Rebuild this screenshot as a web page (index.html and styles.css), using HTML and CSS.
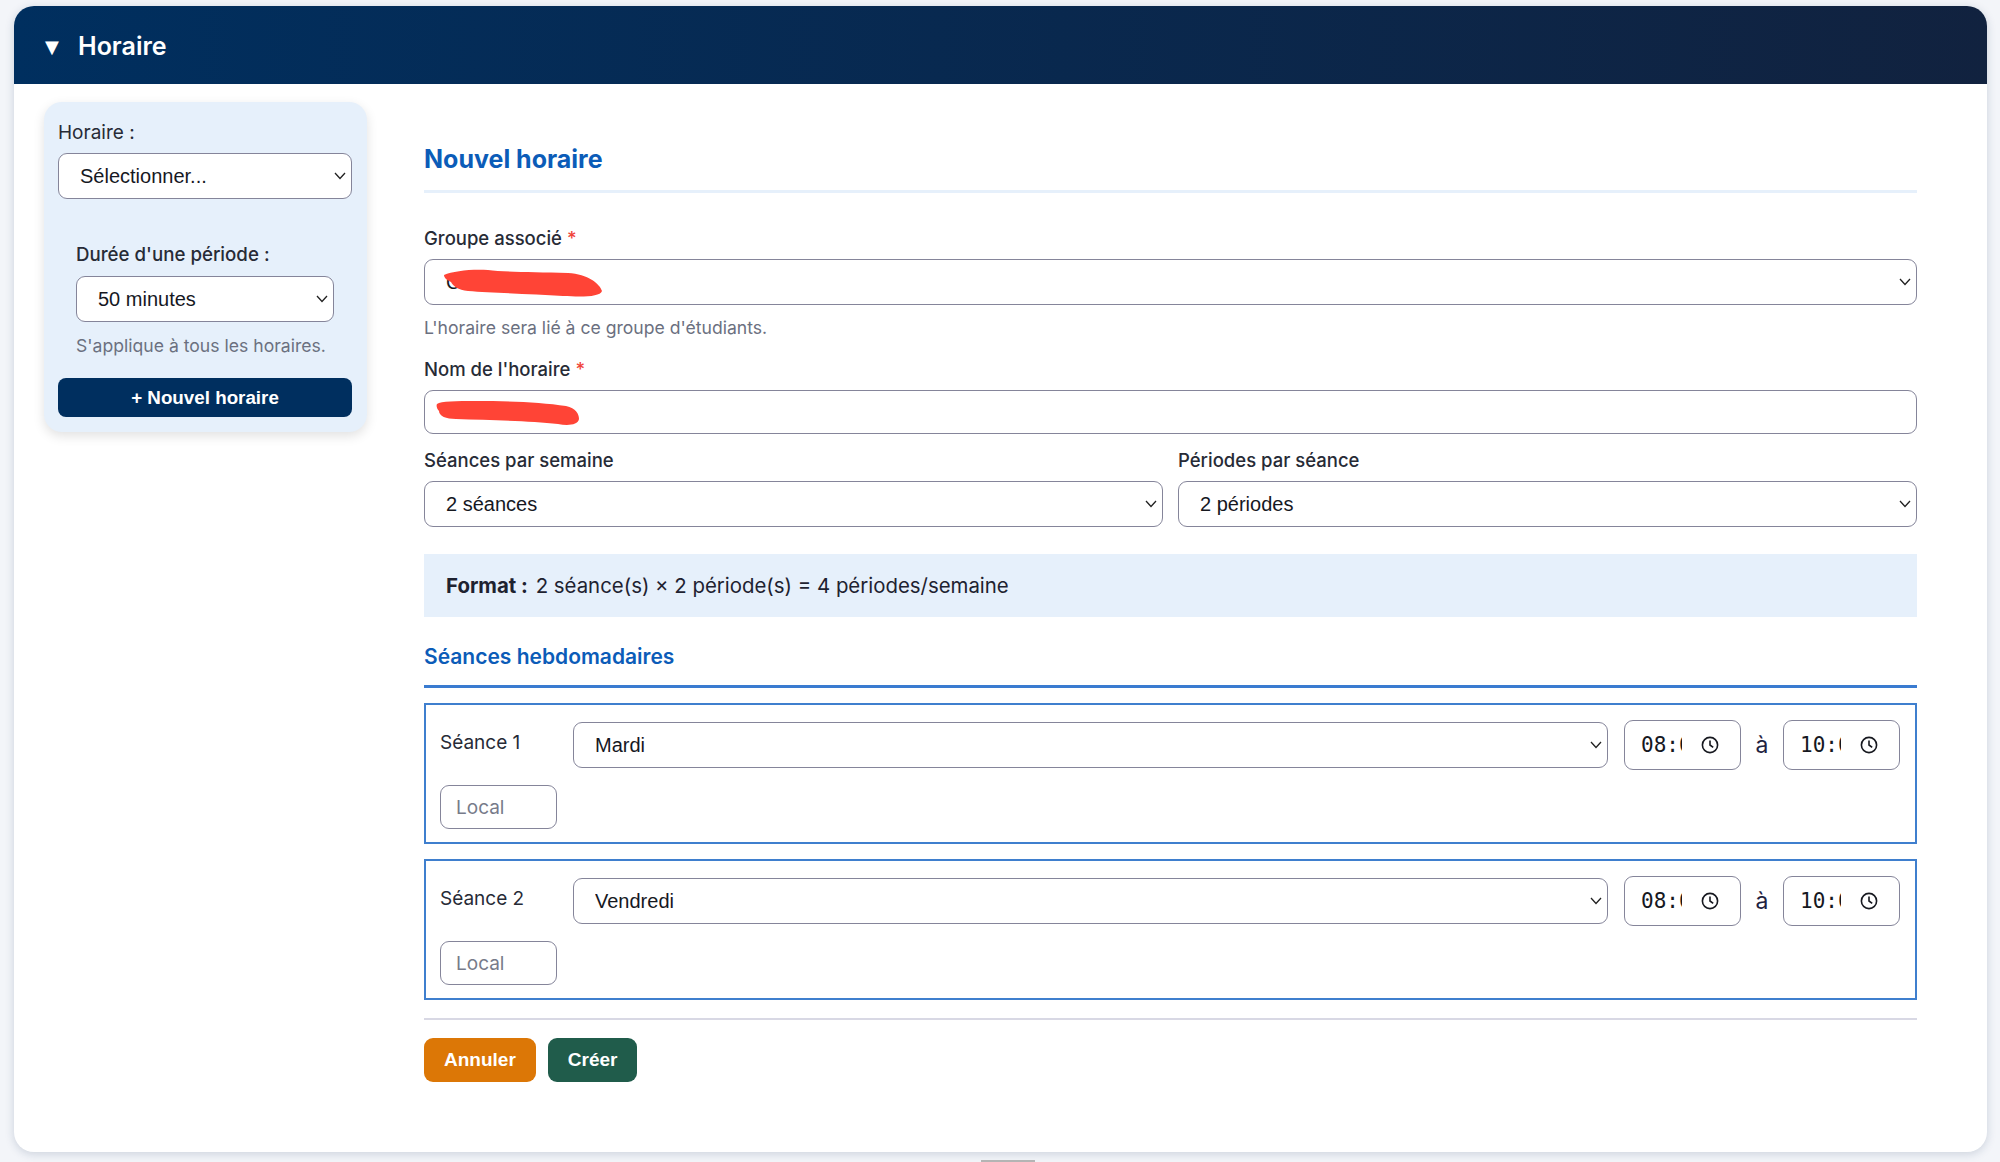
FILE: index.html
```html
<!DOCTYPE html>
<html lang="fr">
<head>
  <meta charset="UTF-8">
  <meta name="viewport" content="width=device-width, initial-scale=1.0">
  <title>Horaire</title>
  <link rel="stylesheet" href="styles.css">
</head>
<body>
<div class="card">
  <div class="card-header">
    <span class="arrow">▼</span>
    <span class="card-title">Horaire</span>
  </div>

  <div class="card-body">
    <div class="sidebar">
      <label class="side-label">Horaire :</label>
      <select class="field">
        <option>Sélectionner...</option>
      </select>

      <div class="duration">
        <label class="duration-label">Durée d'une période :</label>
        <select class="field">
          <option>50 minutes</option>
        </select>
        <p class="hint">S'applique à tous les horaires.</p>
      </div>

      <button class="new-btn">+ Nouvel horaire</button>
    </div>

    <div class="main">
      <h2 class="form-title">Nouvel horaire</h2>

      <label class="label">Groupe associé <span class="req">*</span></label>
      <div class="redacted">
        <select class="field">
          <option>C</option>
        </select>
        <svg class="scribble scribble-group" viewBox="0 0 160 28" width="160" height="28">
          <path d="M1 6 C10 2 28 0 45 1 C60 3 90 3 125 4 C145 5 157 15 159 22 C157 28 140 28 120 27 C90 25 50 24 25 22 C15 21 10 17 8 13 C4 11 1 9 1 6Z" fill="#ff4436"/>
        </svg>
      </div>
      <p class="hint hint-group">L'horaire sera lié à ce groupe d'étudiants.</p>

      <label class="label">Nom de l'horaire <span class="req">*</span></label>
      <div class="redacted">
        <input class="field text-field" type="text">
        <svg class="scribble scribble-name" viewBox="0 0 144 25" width="144" height="25">
          <path d="M1 3 C5 0 20 0 40 0 C70 0 105 1 130 5 C140 7 143 13 143 18 C142 24 132 25 122 23 C95 20 55 19 20 18 C10 18 3 15 3 10 C1 8 0 5 1 3Z" fill="#ff4436"/>
        </svg>
      </div>

      <div class="two-cols">
        <div>
          <label class="label">Séances par semaine</label>
          <select class="field">
            <option>2 séances</option>
          </select>
        </div>
        <div>
          <label class="label">Périodes par séance</label>
          <select class="field">
            <option>2 périodes</option>
          </select>
        </div>
      </div>

      <div class="format-box"><strong>Format :</strong> 2 séance(s) × 2 période(s) = 4 périodes/semaine</div>

      <h3 class="section-title">Séances hebdomadaires</h3>

      <div class="seance">
        <div class="seance-row">
          <span class="seance-name">Séance 1</span>
          <select class="field day">
            <option>Mardi</option>
          </select>
          <div class="time">
            <span class="time-value">08:00</span>
            <svg class="clock" viewBox="0 0 18 18" width="18" height="18"><circle cx="9" cy="9" r="7.6"/><path d="M9 4.4V9l3.2 2.4"/></svg>
          </div>
          <span class="to">à</span>
          <div class="time">
            <span class="time-value">10:00</span>
            <svg class="clock" viewBox="0 0 18 18" width="18" height="18"><circle cx="9" cy="9" r="7.6"/><path d="M9 4.4V9l3.2 2.4"/></svg>
          </div>
        </div>
        <input class="local" type="text" placeholder="Local">
      </div>

      <div class="seance">
        <div class="seance-row">
          <span class="seance-name">Séance 2</span>
          <select class="field day">
            <option>Vendredi</option>
          </select>
          <div class="time">
            <span class="time-value">08:00</span>
            <svg class="clock" viewBox="0 0 18 18" width="18" height="18"><circle cx="9" cy="9" r="7.6"/><path d="M9 4.4V9l3.2 2.4"/></svg>
          </div>
          <span class="to">à</span>
          <div class="time">
            <span class="time-value">10:00</span>
            <svg class="clock" viewBox="0 0 18 18" width="18" height="18"><circle cx="9" cy="9" r="7.6"/><path d="M9 4.4V9l3.2 2.4"/></svg>
          </div>
        </div>
        <input class="local" type="text" placeholder="Local">
      </div>

      <div class="actions">
        <button class="btn btn-cancel">Annuler</button>
        <button class="btn btn-create">Créer</button>
      </div>
    </div>
  </div>
</div>
<div class="handle"></div>
</body>
</html>
```

FILE: styles.css
```css
* {
  box-sizing: border-box;
}

body {
  margin: 0;
  padding: 6px 13px 0 14px;
  height: 1162px;
  overflow: hidden;
  background: #f3f5f9;
  font-family: Inter, "Liberation Sans", sans-serif;
  color: #272b36;
}

.card {
  height: 1146px;
  background: white;
  border-radius: 20px;
  box-shadow: 0 2px 10px rgba(20, 50, 90, 0.18);
  overflow: hidden;
}

.card-header {
  height: 78px;
  display: flex;
  align-items: center;
  padding: 2px 0 0 31px;
  background: linear-gradient(90deg, #002f5f, #11223f);
  color: white;
}

.arrow {
  width: 33px;
  font-family: "DejaVu Sans", sans-serif;
  font-size: 18px;
}

.card-title {
  font-size: 25px;
  font-weight: 600;
}

.card-body {
  display: flex;
  align-items: flex-start;
  padding: 18px 70px 0 30px;
}

.sidebar {
  width: 323px;
  flex-shrink: 0;
  padding: 19px 15px 15px 14px;
  background: #e6f0fb;
  border-radius: 18px;
  box-shadow: 0 4px 12px rgba(0, 0, 0, 0.12);
}

.side-label {
  display: block;
  margin-bottom: 8px;
  font-size: 19px;
  line-height: 24px;
}

.field {
  display: block;
  width: 100%;
  height: 46px;
  padding: 0 30px 0 21px;
  appearance: none;
  border: 1.5px solid #85859a;
  border-radius: 9px;
  background: white url("data:image/svg+xml,%3Csvg xmlns='http://www.w3.org/2000/svg' width='12' height='8' viewBox='0 0 12 8'%3E%3Cpath d='M1 1l5 5.5L11 1' fill='none' stroke='%23222' stroke-width='1.3'/%3E%3C/svg%3E") no-repeat right 5px center;
  font-family: "Liberation Sans", Arial, sans-serif;
  font-size: 20px;
  color: #16181f;
}

.text-field {
  height: 44px;
  background-image: none;
}

.duration {
  margin: 44px 18px 0;
}

.duration-label {
  display: block;
  margin-bottom: 9px;
  font-size: 18.7px;
  font-weight: 500;
  line-height: 24px;
}

.hint {
  margin: 12px 0 0;
  font-size: 17.6px;
  line-height: 24px;
  color: #6b7080;
}

.new-btn {
  display: block;
  width: 100%;
  height: 39px;
  margin-top: 20px;
  border: none;
  border-radius: 8px;
  background: #002f5f;
  color: white;
  font-family: "Liberation Sans", Arial, sans-serif;
  font-size: 18.8px;
  font-weight: bold;
}

.main {
  flex: 1;
  min-width: 0;
  margin-left: 57px;
  padding-top: 41px;
}

.form-title {
  margin: 0 0 33px;
  padding-bottom: 15px;
  border-bottom: 3px solid #e6f0fb;
  font-size: 25px;
  font-weight: 700;
  line-height: 32px;
  color: #0b5cb8;
}

.label {
  display: block;
  margin-bottom: 9px;
  font-size: 18.5px;
  font-weight: 500;
  line-height: 24px;
}

.req {
  color: #f0443a;
}

.redacted {
  position: relative;
}

.scribble {
  position: absolute;
}

.scribble-group {
  left: 19px;
  top: 10px;
}

.scribble-name {
  left: 12px;
  top: 11px;
}

.hint-group {
  margin: 11px 0 17px;
}

.two-cols {
  display: grid;
  grid-template-columns: 1fr 1fr;
  column-gap: 15px;
  margin-top: 14px;
}

.format-box {
  margin-top: 27px;
  padding: 0 22px;
  height: 63px;
  line-height: 63px;
  background: #e6f0fb;
  font-size: 20.4px;
  color: #1e2230;
}

.format-box strong {
  margin-right: 2px;
}

.section-title {
  margin: 27px 0 11px;
  padding-bottom: 15px;
  border-bottom: 3px solid #3a7bd0;
  font-size: 21px;
  font-weight: 600;
  line-height: 26px;
  color: #0b5cb8;
}

.seance {
  height: 141px;
  margin-top: 15px;
  padding: 14px 15px 0 14px;
  border: 2px solid #3f7fce;
}

.seance-row {
  display: flex;
  align-items: center;
  height: 51px;
}

.seance-name {
  width: 133px;
  margin-top: -5px;
  font-size: 19px;
}

.day {
  flex: 1;
  min-width: 0;
}

.time {
  display: flex;
  align-items: center;
  width: 117px;
  height: 50px;
  margin-left: 16px;
  padding-left: 16px;
  border: 1.5px solid #85859a;
  border-radius: 9px;
  background: white;
}

.to {
  width: 42px;
  margin-right: -16px;
  text-align: center;
  font-size: 23px;
  color: #1e2240;
}

.time-value {
  display: block;
  width: 40.5px;
  overflow: hidden;
  font-family: "DejaVu Sans Mono", monospace;
  font-size: 21px;
  color: #16181f;
}

.clock {
  margin-left: 19px;
  fill: none;
  stroke: #16181f;
  stroke-width: 1.6;
}

.local {
  display: block;
  width: 117px;
  height: 44px;
  margin-top: 15px;
  padding: 0 15px;
  border: 1.5px solid #85859a;
  border-radius: 9px;
  font-family: Inter, sans-serif;
  font-size: 19px;
}

.local::placeholder {
  color: #777b8a;
}

.actions {
  display: flex;
  gap: 12px;
  margin-top: 18px;
  padding-top: 18px;
  border-top: 2px solid #d8d8e4;
}

.btn {
  height: 44px;
  padding: 0 20px;
  border: none;
  border-radius: 9px;
  color: white;
  font-family: "Liberation Sans", Arial, sans-serif;
  font-size: 19px;
  font-weight: bold;
}

.btn-cancel {
  background: #dc7706;
}

.btn-create {
  background: #205c4b;
}

.handle {
  width: 54px;
  height: 2px;
  margin: 8px 0 0 967px;
  background: #b4b4b4;
}
```
